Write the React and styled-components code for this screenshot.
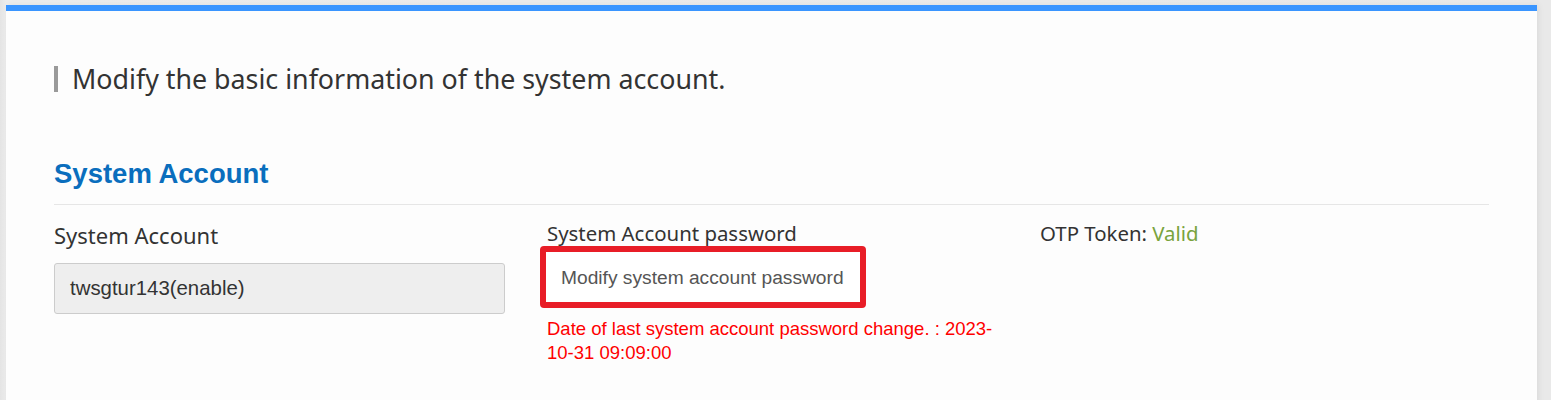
import styled, { createGlobalStyle } from "styled-components";

const GlobalStyle = createGlobalStyle`
  html, body {
    margin: 0;
    padding: 0;
    background: #e9e9e9;
  }
  body {
    font-family: "Noto Sans", "Liberation Sans", sans-serif;
    color: #333;
  }
`;

const Page = styled.div`
  min-height: 400px;
  padding: 5px 14px 0 6px;
  background: linear-gradient(to right, #e4e4e4 0, #ececec 6px, #e9e9e9 100%);
  box-sizing: border-box;
`;

const Card = styled.div`
  background: #fdfdfd;
  border-top: 6px solid #3a95ff;
  min-height: 395px;
  padding: 0 48px;
  box-shadow: 2px 0 6px rgba(0, 0, 0, 0.06);
`;

const Title = styled.h1`
  margin: 0;
  padding-top: 50px;
  display: flex;
  align-items: center;
  gap: 14px;
  font-size: 26.8px;
  font-weight: 400;
  line-height: 36px;
  color: #333;

  &::before {
    content: "";
    width: 4px;
    height: 26px;
    background: #9a9a9a;
  }
`;

const SectionHeading = styled.h2`
  margin: 59px 0 0;
  padding-bottom: 12px;
  border-bottom: 1px solid #e6e6e6;
  font-family: "Liberation Sans", Arial, sans-serif;
  font-size: 27.5px;
  font-weight: 700;
  line-height: 36px;
  color: #0a6ebd;
`;

const Fields = styled.div`
  display: grid;
  grid-template-columns: repeat(3, 463px);
  column-gap: 30px;
  padding-top: 13px;
`;

const Field = styled.div`
  display: flex;
  flex-direction: column;
  align-items: flex-start;
`;

const Label = styled.div`
  font-size: ${(p) => p.$size || 20.4}px;
  line-height: 30px;
  color: #333;
  margin-top: ${(p) => p.$offset || 0}px;
`;

const Status = styled.span`
  color: #79a33d;
`;

const ReadonlyInput = styled.div`
  box-sizing: border-box;
  width: 451px;
  height: 51px;
  margin-top: 13px;
  padding: 0 15px;
  display: flex;
  align-items: center;
  background: #eeeeee;
  border: 1px solid #cccccc;
  border-radius: 3px;
  font-family: "Liberation Sans", Arial, sans-serif;
  font-size: 20.4px;
  color: #333;
`;

const ActionButton = styled.button`
  box-sizing: border-box;
  margin: -2px 0 0 -7px;
  height: 62px;
  padding: 2px 16px 0 15px;
  background: #fff;
  border: 6px solid #e81d27;
  border-radius: 4px;
  font-family: "Liberation Sans", Arial, sans-serif;
  font-size: 19.2px;
  color: #555;
  cursor: pointer;
`;

const Note = styled.div`
  margin-top: 9px;
  font-family: "Liberation Sans", Arial, sans-serif;
  font-size: 18.5px;
  line-height: 24px;
  color: #ff0000;
`;

export default function App() {
  return (
    <>
      <GlobalStyle />
      <Page>
        <Card>
          <Title>Modify the basic information of the system account.</Title>
          <SectionHeading>System Account</SectionHeading>
          <Fields>
            <Field>
              <Label $size={22} $offset={2}>System Account</Label>
              <ReadonlyInput>twsgtur143(enable)</ReadonlyInput>
            </Field>
            <Field>
              <Label>System Account password</Label>
              <ActionButton type="button">Modify system account password</ActionButton>
              <Note>Date of last system account password change. : 2023-10-31 09:09:00</Note>
            </Field>
            <Field>
              <Label>
                OTP Token: <Status>Valid</Status>
              </Label>
            </Field>
          </Fields>
        </Card>
      </Page>
    </>
  );
}
